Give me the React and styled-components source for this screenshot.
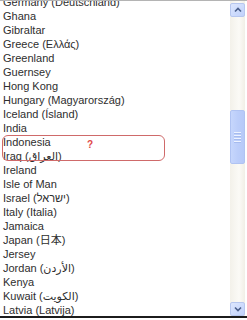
import React from "react";
import styled, { createGlobalStyle } from "styled-components";

const Global = createGlobalStyle`
  html, body { margin: 0; padding: 0; background: #fff; }
  body { font-family: "Liberation Sans", Arial, "DejaVu Sans", "Noto Sans CJK JP", sans-serif; }
`;

const Frame = styled.div`
  position: relative;
  width: 247px;
  height: 320px;
  background: #fff;
  overflow: hidden;
`;

const ListBox = styled.div`
  display: flex;
  height: 315px;
  border-top: 1px solid #b4b4b4;
  border-bottom: 2px solid #1c1c1c;
`;

const Options = styled.div`
  flex: 1;
  overflow: hidden;
  padding-left: 3px;
`;

const OptionList = styled.ul`
  list-style: none;
  margin: -6px 0 0 0;
  padding: 0;
`;

const Option = styled.li`
  font-size: 11px;
  line-height: 14px;
  height: 14px;
  color: #2e2e2e;
  white-space: nowrap;
`;

const Scrollbar = styled.div`
  width: 15px;
  margin-right: 2px;
  display: flex;
  flex-direction: column;
  background: linear-gradient(to right, #f3f1ea, #fbfaf6 60%, #f1efe6);
`;

const ArrowButton = styled.div`
  height: 14px;
  margin: ${(p) => (p.$down ? "0" : "2px 0 0 0")};
  border: 1px solid #b7c7ef;
  border-radius: 2px;
  background: linear-gradient(to bottom right, #dde7fe, #c0d1fb);
  display: flex;
  align-items: center;
  justify-content: center;
  box-sizing: border-box;
`;

const Track = styled.div`
  flex: 1;
  display: flex;
  flex-direction: column;
`;

const Thumb = styled.div`
  margin-top: 93px;
  height: 54px;
  border: 1px solid #b0c3f2;
  border-radius: 2px;
  background: linear-gradient(to right, #c6d6fc, #bccefa 50%, #b6c9f8);
  box-sizing: border-box;
  display: flex;
  flex-direction: column;
  align-items: center;
  justify-content: center;
  gap: 1px;
`;

const Grip = styled.span`
  display: block;
  width: 7px;
  height: 1px;
  background: #eef3ff;
  box-shadow: 0 1px 0 #a6bbee;
  margin-bottom: 1px;
`;

const Annotation = styled.div`
  position: absolute;
  left: 2px;
  top: 135px;
  width: 163px;
  height: 26px;
  box-sizing: border-box;
  border: 1px solid #cf6a6a;
  border-radius: 6px;
`;

const Question = styled.span`
  position: absolute;
  left: 84px;
  top: 3px;
  font-size: 10px;
  font-weight: bold;
  color: #e04848;
`;

const Chevron = ({ down }) => (
  <svg width="8" height="6" viewBox="0 0 8 6">
    <path
      d={down ? "M1 1.5 L4 4.5 L7 1.5" : "M1 4.5 L4 1.5 L7 4.5"}
      fill="none"
      stroke="#4a5f8c"
      strokeWidth="1.6"
    />
  </svg>
);

const countries = [
  "Germany (Deutschland)",
  "Ghana",
  "Gibraltar",
  "Greece (Ελλάς)",
  "Greenland",
  "Guernsey",
  "Hong Kong",
  "Hungary (Magyarország)",
  "Iceland (Ísland)",
  "India",
  "Indonesia",
  "Iraq (\u202Bالعراق\u202C)",
  "Ireland",
  "Isle of Man",
  "Israel (\u202Bישראל\u202C)",
  "Italy (Italia)",
  "Jamaica",
  "Japan (日本)",
  "Jersey",
  "Jordan (\u202Bالأردن\u202C)",
  "Kenya",
  "Kuwait (\u202Bالكويت\u202C)",
  "Latvia (Latvija)",
];

export default function App() {
  return (
    <>
      <Global />
      <Frame>
        <ListBox>
          <Options>
            <OptionList>
              {countries.map((c) => (
                <Option key={c}>{c}</Option>
              ))}
            </OptionList>
          </Options>
          <Scrollbar>
            <ArrowButton>
              <Chevron />
            </ArrowButton>
            <Track>
              <Thumb>
                <Grip />
                <Grip />
                <Grip />
                <Grip />
              </Thumb>
            </Track>
            <ArrowButton $down>
              <Chevron down />
            </ArrowButton>
          </Scrollbar>
        </ListBox>
        <Annotation>
          <Question>?</Question>
        </Annotation>
      </Frame>
    </>
  );
}
